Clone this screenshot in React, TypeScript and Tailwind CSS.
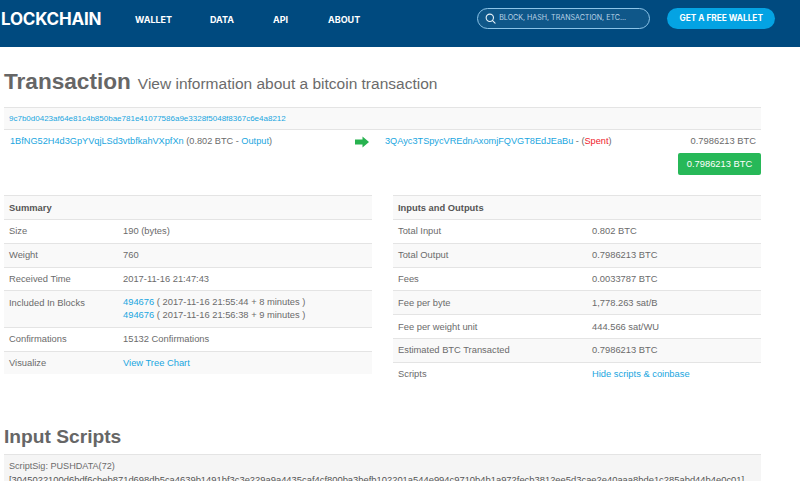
import React from "react";

const sans = "font-['Liberation_Sans',Arial,sans-serif]";
const head = "font-['Inter',sans-serif]";

const Link = ({ children }: { children: React.ReactNode }) => (
  <span className="text-[#1aa6e0]">{children}</span>
);

const Row = ({ label, value, alt, leftCol, tall }: any) => (
  <div
    className={`flex border-t border-[#e4e4e4] px-[5px] ${tall ? "pt-[5px] h-[36.5px]" : "items-center h-[23.8px]"} ${alt ? "bg-[#f9f9f9]" : "bg-white"}`}
  >
    <div className={`${leftCol} shrink-0`}>{label}</div>
    <div>{value}</div>
  </div>
);

const summary: any[] = [
  ["Size", "190 (bytes)"],
  ["Weight", "760"],
  ["Received Time", "2017-11-16 21:47:43"],
  [
    "Included In Blocks",
    <div className="leading-[12.5px]">
      <div>
        <Link>494676</Link> ( 2017-11-16 21:55:44 + 8 minutes )
      </div>
      <div>
        <Link>494676</Link> ( 2017-11-16 21:56:38 + 9 minutes )
      </div>
    </div>,
    true,
  ],
  ["Confirmations", "15132 Confirmations"],
  ["Visualize", <Link>View Tree Chart</Link>],
];

const inputs: any[] = [
  ["Total Input", "0.802 BTC"],
  ["Total Output", "0.7986213 BTC"],
  ["Fees", "0.0033787 BTC"],
  ["Fee per byte", "1,778.263 sat/B"],
  ["Fee per weight unit", "444.566 sat/WU"],
  ["Estimated BTC Transacted", "0.7986213 BTC"],
  ["Scripts", <Link>Hide scripts &amp; coinbase</Link>],
];

const Table = ({ title, rows, leftCol, width }: any) => (
  <div className={width}>
    <div className="flex items-center h-[24px] border-t border-[#e4e4e4] bg-[#f9f9f9] px-[5px] pt-[2px] font-bold text-[#555]">
      {title}
    </div>
    {rows.map((r: any, i: number) => (
      <Row key={i} label={r[0]} value={r[1]} tall={r[2]} alt={i % 2 === 1} leftCol={leftCol} />
    ))}
  </div>
);

export default function App() {
  return (
    <div className={`${sans} h-[481px] w-[800px] overflow-hidden bg-white text-[#6b6b6b] text-[9.35px]`}>
      <header className={`${head} flex items-center h-[47px] bg-[#004a7f] text-white`}>
        <div className="ml-px w-[134px] pb-[11px] text-[17px] font-bold leading-none tracking-[-0.2px] mt-[2px]">LOCKCHAIN</div>
        <nav className="flex pb-[11px] mt-[2px] text-[9px] font-bold leading-none">
          <span className="w-[75px]">WALLET</span>
          <span className="w-[63px]">DATA</span>
          <span className="w-[55px]">API</span>
          <span>ABOUT</span>
        </nav>
        <div className="ml-[117px] mb-[11px] flex items-center w-[173px] h-[21px] rounded-full border border-[#8cc4e8] bg-[#0f5789] pl-[7px] text-[7.1px] text-[#b9d3e6]">
          <svg width="11" height="11" viewBox="0 0 24 24" fill="none" stroke="#e6f1f8" strokeWidth="2.4" strokeLinecap="round">
            <circle cx="10.5" cy="10.5" r="8" />
            <path d="M16.5 16.5 22 22" />
          </svg>
          <span className="ml-[3px]">BLOCK, HASH, TRANSACTION, ETC...</span>
        </div>
        <div className="ml-[17px] mb-[11px] flex items-center justify-center w-[108px] h-[21px] rounded-full bg-[#04a3e3] text-[8.3px] font-bold">
          GET A FREE WALLET
        </div>
      </header>

      <main className="px-[4px] w-[765px]">
        <h1 className="mt-[21px] flex items-baseline h-[27px] leading-[27px] text-[#6b6b6b]">
          <span className="text-[22.6px] font-bold text-[#666]">Transaction</span>
          <span className="ml-[7px] text-[15.5px]">View information about a bitcoin transaction</span>
        </h1>

        <div className="mt-[12px] flex items-center h-[23px] border-y border-[#e4e4e4] bg-[#f9f9f9] pl-[5px] text-[8px] text-[#1aa6e0]">
          9c7b0d0423af64e81c4b850bae781e41077586a9e3328f5048f8367c6e4a8212
        </div>

        <div className="flex pl-[6px] pt-[5px] h-[65px] leading-[13px] text-[9.2px]">
          <div className="w-[345px]">
            <Link>1BfNG52H4d3GpYVqjLSd3vtbfkahVXpfXn</Link> (0.802 BTC - <Link>Output</Link>)
          </div>
          <svg className="mt-[1px] w-[14px] h-[12px]" viewBox="0 0 14 12" fill="#27b24f">
            <path d="M0 3.5h7.5V0.5L14 6l-6.5 5.5v-3H0z" />
          </svg>
          <div className="ml-[16px] w-[290px]">
            <Link>3QAyc3TSpycVREdnAxomjFQVGT8EdJEaBu</Link> - (<span className="text-[#f0202a]">Spent</span>)
          </div>
          <div className="flex flex-col items-end flex-1 text-[9.35px]">
            <div className="pr-[5px] whitespace-nowrap">0.7986213&nbsp;BTC</div>
            <div className="mt-[5px] flex items-center justify-center w-[83px] h-[22px] shrink-0 rounded-[2px] bg-[#27b858] text-white whitespace-nowrap">
              0.7986213 BTC
            </div>
          </div>
        </div>

        <div className="flex justify-between">
          <Table title="Summary" rows={summary} leftCol="w-[114px]" width="w-[368px]" />
          <Table title="Inputs and Outputs" rows={inputs} leftCol="w-[194px]" width="w-[368px]" />
        </div>

        <h2 className="mt-[39px] h-[24px] text-[19.2px] leading-[24px] font-bold text-[#666]">Input Scripts</h2>
        <div className="mt-[5px] h-[60px] border-t border-[#e4e4e4] bg-[#f5f5f5] px-[5px] pt-[5px] leading-[13px] whitespace-nowrap">
          <div className="text-[9.1px]">ScriptSig: PUSHDATA(72)</div>
          <div className="text-[#555] text-[9.4px]">
            [3045022100d6bdf6cbeb871d698db5ca4639b1491bf3c3e229a9a4435caf4cf800ba3befb102201a544e994c9710b4b1a972fecb3812ee5d3cae2e40aaa8bde1c285abd44b4e0c01]
          </div>
        </div>
      </main>
    </div>
  );
}
